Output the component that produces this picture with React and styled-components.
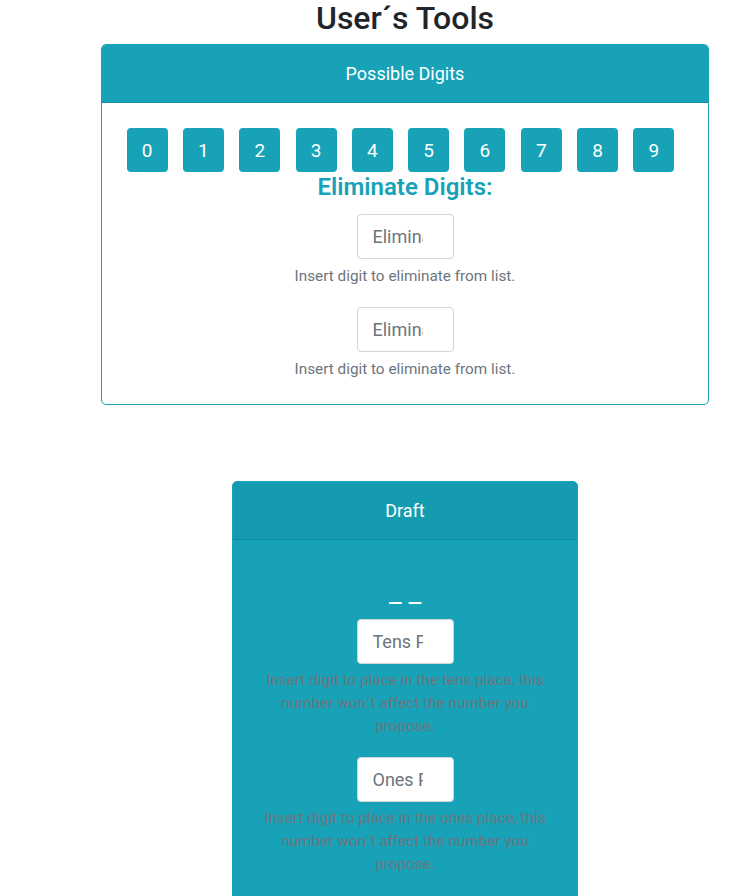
import React from "react";
import styled, { createGlobalStyle } from "styled-components";

const GlobalStyle = createGlobalStyle`
  html, body {
    margin: 0;
    padding: 0;
    background: #fff;
  }
  body {
    font-family: "Segoe UI", Roboto, "Liberation Sans", sans-serif;
    color: #212529;
  }
`;

const Page = styled.main`
  width: 740px;
  display: flex;
  flex-direction: column;
  align-items: center;
  padding-left: 70px;
  box-sizing: border-box;
`;

const Title = styled.h2`
  margin: 0 0 8px;
  font-size: 32px;
  font-weight: 500;
  line-height: 36px;
  color: #212529;
`;

const Card = styled.section`
  width: ${(p) => p.width}px;
  box-sizing: border-box;
  border: 1px solid #17a2b8;
  border-radius: 5px;
  overflow: hidden;
  background: ${(p) => (p.filled ? "#17a2b8" : "#fff")};
  margin-bottom: ${(p) => p.gap || 0}px;
`;

const CardHeader = styled.header`
  height: 57px;
  display: flex;
  align-items: center;
  justify-content: center;
  background: ${(p) => (p.dark ? "#159bb0" : "#17a2b8")};
  border-bottom: 1px solid ${(p) => (p.dark ? "#128a9d" : "#148fa3")};
  color: #fff;
  font-size: 18px;
`;

const CardBody = styled.div`
  display: flex;
  flex-direction: column;
  align-items: center;
  padding: ${(p) => p.pad};
`;

const DigitRow = styled.div`
  display: flex;
  gap: 15.3px;
  padding-right: 9px;
`;

const DigitButton = styled.button`
  width: 41px;
  height: 44px;
  border: none;
  border-radius: 4px;
  background: #17a2b8;
  color: #fff;
  font-family: inherit;
  font-size: 19px;
  padding: 0;
  cursor: pointer;
`;

const Subtitle = styled.h4`
  margin: 2px 0 14px;
  color: #17a2b8;
  font-size: 24px;
  font-weight: 600;
  line-height: 26px;
`;

const Field = styled.input`
  width: 97px;
  height: 45px;
  box-sizing: border-box;
  border: 1px solid #ced4da;
  border-radius: 4px;
  padding: 0 30px 0 15px;
  font-family: inherit;
  font-size: 18px;
  color: #495057;
  background: #fff;
  &::placeholder {
    color: #6c757d;
  }
`;

const Help = styled.small`
  display: block;
  margin: ${(p) => p.m};
  font-size: 15.3px;
  line-height: 23px;
  color: #6c757d;
  text-align: center;
  max-width: 296px;
`;

const Blanks = styled.div`
  margin: 42px 0 15px;
  color: #fff;
  font-size: 28px;
  line-height: 22px;
  height: 22px;
`;

const digits = [0, 1, 2, 3, 4, 5, 6, 7, 8, 9];

export default function App() {
  return (
    <>
      <GlobalStyle />
      <Page>
        <Title>User´s Tools</Title>
        <Card width={608} gap={76}>
          <CardHeader>Possible Digits</CardHeader>
          <CardBody pad="25px 20px 23px">
            <DigitRow>
              {digits.map((d) => (
                <DigitButton key={d}>{d}</DigitButton>
              ))}
            </DigitRow>
            <Subtitle>Eliminate Digits:</Subtitle>
            <Field placeholder="Eliminate" />
            <Help m="6px 0 19px">Insert digit to eliminate from list.</Help>
            <Field placeholder="Eliminate" />
            <Help m="6px 0 0">Insert digit to eliminate from list.</Help>
          </CardBody>
        </Card>
        <Card width={346} filled>
          <CardHeader dark>Draft</CardHeader>
          <CardBody pad="0 20px 30px">
            <Blanks>_ _</Blanks>
            <Field placeholder="Tens Place" />
            <Help m="5px 0 19px">
              Insert digit to place in the tens place, this number won´t affect
              the number you propose.
            </Help>
            <Field placeholder="Ones Place" />
            <Help m="5px 0 0">
              Insert digit to place in the ones place, this number won´t affect
              the number you propose.
            </Help>
          </CardBody>
        </Card>
      </Page>
    </>
  );
}
